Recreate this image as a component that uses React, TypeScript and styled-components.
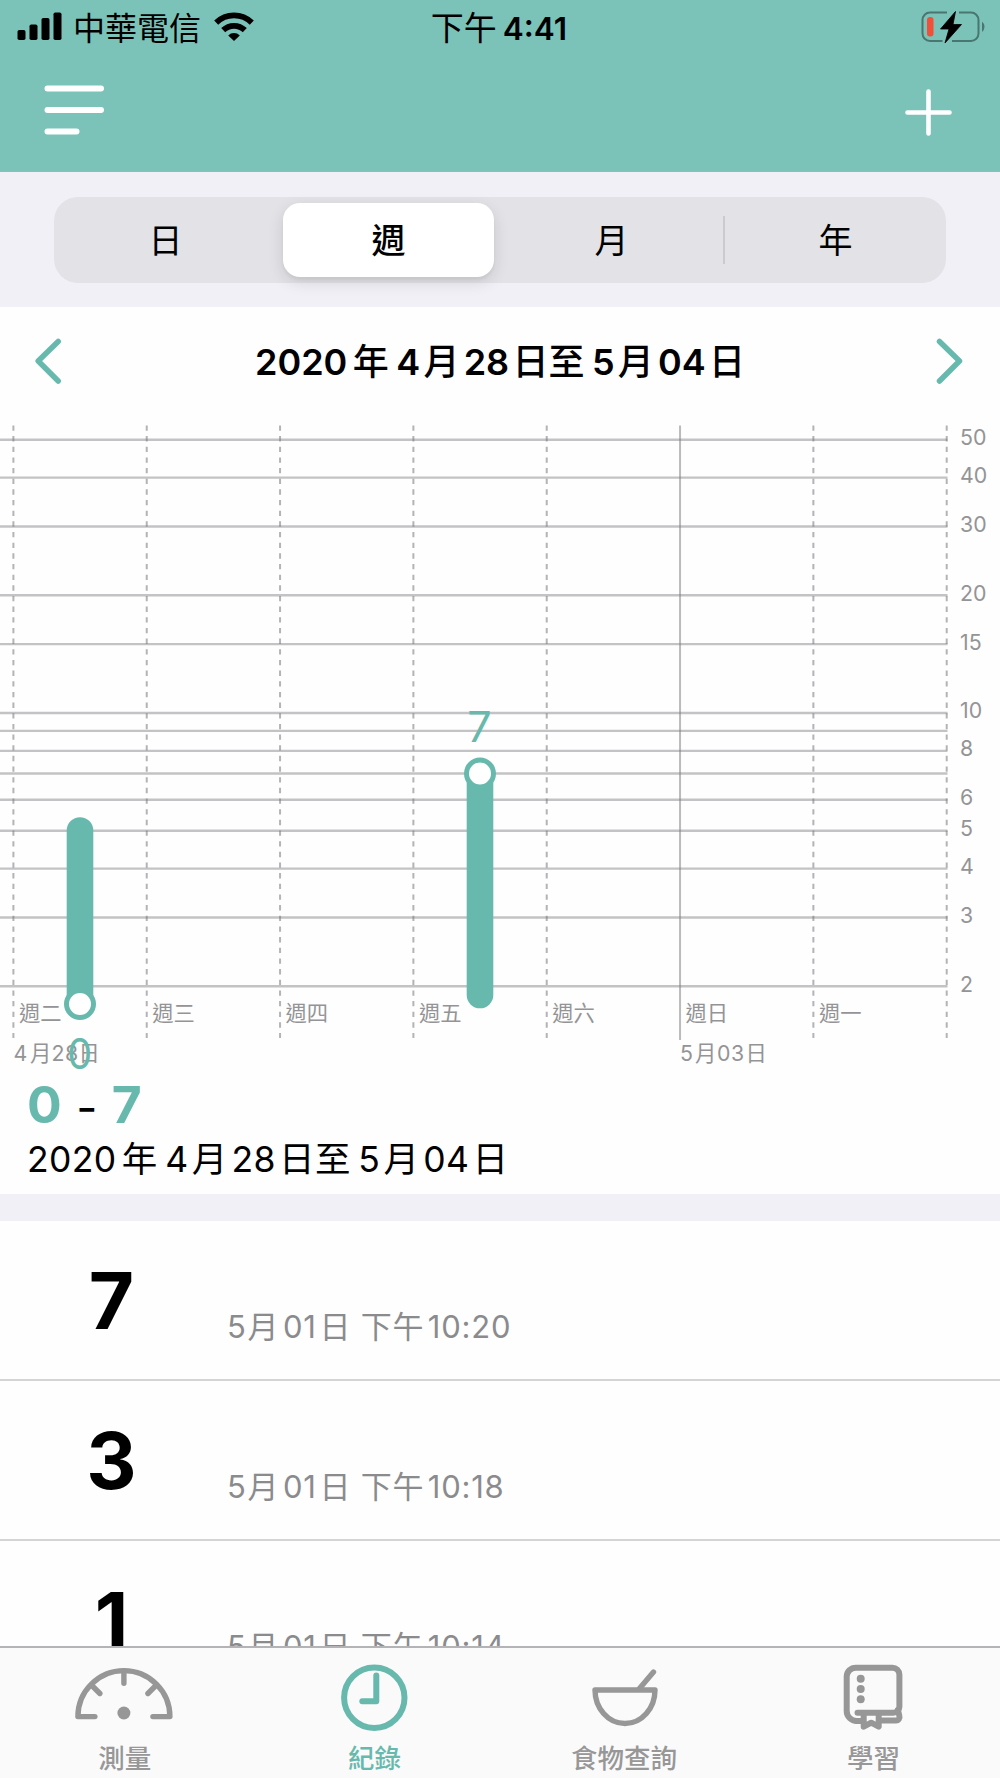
import React from "react";
import styled, { createGlobalStyle } from "styled-components";

const teal = "#68b9ad";
const grey = "#979797";
const latin = `Inter, "Noto Sans CJK TC", sans-serif`;

const GlobalStyle = createGlobalStyle`
  * { box-sizing: border-box; }
  body { margin: 0; background: #fefefe; font-family: ${latin}; color: #000; }
`;

const Screen = styled.div`
  width: 1000px;
  height: 1778px;
  overflow: hidden;
  display: flex;
  flex-direction: column;
  background: #fefefe;
`;

const Header = styled.header`
  height: 172px;
  flex: none;
  background: #7bc3b8;
  border-bottom: 1px solid #9fb5b3;
`;

const StatusBar = styled.div`
  height: 54px;
  display: grid;
  grid-template-columns: 1fr auto 1fr;
  align-items: center;
  padding: 0 14px 0 17px;
`;

const StatusSide = styled.div<{ $end?: boolean }>`
  display: flex;
  align-items: center;
  justify-content: ${(p) => (p.$end ? "flex-end" : "flex-start")};
`;

const Carrier = styled.span`
  font-size: 32px;
  line-height: 51px;
  padding-top: 3px;
  margin: 0 13px 0 11px;
  font-weight: 400;
`;

const Clock = styled.div`
  line-height: 51px;
  padding-top: 3px;
  margin-right: 5px;
  font-size: 33px;
  font-weight: 400;
  white-space: nowrap;
`;

const ClockTime = styled.span`
  font-size: 31.5px;
  font-weight: 600;
  margin-left: 6px;
`;

const NavBar = styled.div`
  height: 117px;
  display: flex;
  justify-content: space-between;
  padding: 29.5px 47px 0 43px;
`;

const IconButton = styled.button`
  border: 0;
  padding: 0;
  background: none;
  display: block;
  height: 60px;
`;

const SegmentArea = styled.div`
  height: 135px;
  flex: none;
  background: #f1f0f6;
  padding: 25px 54px 0;
`;

const SegmentedControl = styled.div`
  height: 86px;
  border-radius: 24px;
  background: #e3e2e7;
  display: grid;
  grid-template-columns: repeat(4, 1fr);
  align-items: center;
`;

const Segment = styled.div<{ $active?: boolean; $divided?: boolean }>`
  height: ${(p) => (p.$active ? "74px" : "48px")};
  margin: ${(p) => (p.$active ? "0 6px" : "0")};
  padding-top: 2px;
  border-radius: ${(p) => (p.$active ? "17px" : "0")};
  background: ${(p) => (p.$active ? "#fff" : "transparent")};
  box-shadow: ${(p) =>
    p.$active ? "0 5px 16px rgba(0,0,0,.12), 0 3px 3px rgba(0,0,0,.04)" : "none"};
  border-left: ${(p) => (p.$divided ? "2px solid #cbcacf" : "0")};
  display: flex;
  align-items: center;
  justify-content: center;
  font-size: 34px;
  font-weight: ${(p) => (p.$active ? 500 : 400)};
  line-height: 48px;
`;

const DateBar = styled.div`
  height: 118px;
  flex: none;
  display: flex;
  align-items: center;
  justify-content: space-between;
  padding: 0 32px 10px;
`;

const RangeTitle = styled.h1`
  margin: 0;
  padding-top: 2px;
  font-size: 36px;
  font-weight: 600;
  line-height: 50px;
  white-space: nowrap;
`;

const Digits = styled.span<{ $single: boolean; $first: boolean }>`
  margin-left: ${(p) => (p.$first ? 0 : p.$single ? 0.21 : 0.115)}em;
  margin-right: ${(p) => (p.$single ? (p.$first ? 0.03 : 0.09) : p.$first ? 0.15 : 0.09)}em;
`;

const Han = styled.span<{ $weight?: number }>`
  font-weight: ${(p) => p.$weight ?? 400};
  white-space: pre;
`;

const ChartBox = styled.div`
  height: 650px;
  flex: none;
`;

const ChartSvg = styled.svg`
  display: block;
  font-family: ${latin};
`;

const Summary = styled.section`
  height: 119px;
  flex: none;
  padding-left: 27px;
`;

const SummaryRange = styled.div`
  height: 59px;
  line-height: 58px;
  font-size: 51.5px;
  font-weight: 700;
  color: ${teal};
  display: flex;
`;

const SummaryDash = styled.span`
  color: #000;
  width: 50px;
  text-align: center;
  font-weight: 400;
  font-size: 46px;
  line-height: 65px;
`;

const SummaryDate = styled.div`
  font-size: 35.5px;
  line-height: 50px;
  padding-top: 1px;
  letter-spacing: 0.01em;
  white-space: nowrap;
`;

const Band = styled.div`
  height: 27px;
  flex: none;
  background: #f1f0f6;
`;

const Records = styled.div`
  flex: 1;
  min-height: 0;
  overflow: hidden;
`;

const Record = styled.div`
  height: 160px;
  display: flex;
  align-items: baseline;
  border-bottom: 2px solid #d4d4d6;
`;

const RecordValue = styled.div`
  width: 223px;
  text-align: center;
  font-size: 78px;
  font-weight: 700;
  line-height: 160px;
`;

const RecordTime = styled.div`
  position: relative;
  top: 9px;
  margin-left: 4px;
  color: #8b8b8e;
  font-size: 31px;
  letter-spacing: 0.025em;
  white-space: nowrap;
`;

const TabBar = styled.nav`
  height: 132px;
  flex: none;
  border-top: 2px solid #b4b4b6;
  background: #fafafb;
  display: grid;
  grid-template-columns: repeat(4, 249.6px);
`;

const Tab = styled.div<{ $active?: boolean }>`
  display: flex;
  flex-direction: column;
  align-items: center;
  color: ${(p) => (p.$active ? teal : grey)};
  padding-top: 12px;
`;

const TabIcon = styled.svg`
  display: block;
  flex: none;
`;

const TabLabel = styled.span`
  font-size: 26.5px;
  line-height: 36px;
  margin-top: 4px;
  font-weight: 500;
`;

function MixedText({ text, weight }: { text: string; weight?: number }) {
  const runs = text.match(/[\d:]+|[^\d:]+/g) ?? [];
  return (
    <>
      {runs.map((run, i) =>
        /\d/.test(run) ? (
          <Digits key={i} $single={run.length === 1} $first={i === 0}>
            {run}
          </Digits>
        ) : (
          <Han key={i} $weight={weight}>
            {run}
          </Han>
        ),
      )}
    </>
  );
}

const SignalIcon = () => (
  <svg width="45" height="30" viewBox="0 0 45 30">
    <rect x="0.5" y="18" width="8" height="10" rx="1.8" />
    <rect x="12.5" y="12.5" width="8" height="15.5" rx="1.8" />
    <rect x="24.5" y="6" width="8" height="22" rx="1.8" />
    <rect x="36.5" y="0.5" width="8" height="27.5" rx="1.8" />
  </svg>
);

const WifiIcon = () => (
  <svg width="40" height="30" viewBox="0 0 40 30" fill="none" stroke="#000" strokeWidth="5.8">
    <path d="M2.2 10.600a25.500 25.500 0 0 1 35.600 0" />
    <path d="M9.2 18.200a15.500 15.500 0 0 1 21.600 0" />
    <path d="M20 29l-5.800-5.600a8.300 8.300 0 0 1 11.600 0z" fill="#000" stroke="none" />
  </svg>
);

const BatteryIcon = () => (
  <svg width="66" height="34" viewBox="0 0 66 34">
    <path
      d="M27 2.500H10a7.500 7.500 0 0 0-7.500 7.500v13.500A7.500 7.500 0 0 0 10 31h12.500M39 2.500h12a7.500 7.500 0 0 1 7.500 7.500v13.500A7.500 7.500 0 0 1 51 31H32"
      fill="none"
      stroke="#49776f"
      strokeWidth="2"
    />
    <path d="M62 11.500q2.500 2 2.500 5.300t-2.500 5.300z" fill="#49776f" />
    <rect x="7" y="7" width="6.5" height="19.5" rx="3" fill="#f24e38" />
    <path d="M35.500 1.500 20.500 19h8.500L25 33 41.500 14.500H33z" stroke="#000" strokeWidth="0.8" strokeLinejoin="round" />
  </svg>
);

const DAYS = ["週二", "週三", "週四", "週五", "週六", "週日", "週一"];
const GRID_VALUES = [50, 40, 30, 20, 15, 10, 9, 8, 7, 6, 5, 4, 3, 2];
const CHART_TOP = 425;
const yFor = (v: number) => 713 - CHART_TOP + (Math.log(10) - Math.log(v)) * 169.8;
const xFor = (i: number) => 13.4 + i * 133.33;

function Chart() {
  return (
    <ChartSvg width="1000" height="650" viewBox="0 0 1000 650">
      <g stroke="#77777c" strokeOpacity="0.43">
        {GRID_VALUES.map((v) => (
          <line key={v} x1="0" x2="947.5" y1={yFor(v)} y2={yFor(v)} strokeWidth="2.4" />
        ))}
      </g>
      {Array.from({ length: 8 }, (_, i) => (
        <line
          key={i}
          x1={xFor(i)}
          x2={xFor(i)}
          y1="0.4"
          y2={i === 5 ? 615 : 613}
          stroke="#77777c"
          strokeOpacity={i === 5 ? 0.5 : 0.55}
          strokeWidth="2"
          strokeDasharray={i === 5 ? undefined : "5.33 5.33"}
        />
      ))}
      <g fill="#949496" fontSize="21.3">
        {GRID_VALUES.filter((v) => v !== 9 && v !== 7).map((v) => (
          <text key={v} x="960" y={yFor(v) + 5.4}>
            {v}
          </text>
        ))}
        {DAYS.map((d, i) => (
          <text key={d} x={xFor(i) + 5.5} y="596">
            {d}
          </text>
        ))}
        <text y="636" x="13.5 30 51.5 65 78.5">4月28日</text>
        <text y="636" x="680 695 717 731 745.5">5月03日</text>
      </g>
      <g stroke={teal} strokeWidth="26.6" strokeLinecap="round">
        <line x1="80" x2="80" y1="405.5" y2="579" />
        <line x1="480" x2="480" y1="349" y2="570" />
      </g>
      <g fill="#fff" stroke={teal} strokeWidth="5">
        <circle cx="80" cy="579" r="13.5" />
        <circle cx="480" cy="348.5" r="13.5" />
      </g>
      <g fill={teal} fontSize="43" fontWeight="400" textAnchor="middle">
        <text x="479.5" y="317">7</text>
        <text x="79.7" y="643.5" textLength="25" lengthAdjust="spacingAndGlyphs">0</text>
      </g>
    </ChartSvg>
  );
}

const GaugeIcon = () => (
  <TabIcon width="100" height="76" viewBox="1.1 0 100 76" fill="none" stroke="currentColor" strokeWidth="5.4" strokeLinecap="round" strokeLinejoin="round">
    <path d="M21 56.600H4a46 46 0 0 1 92 0H79" />
    <path d="M50 12v11.300M18.500 26l7.500 7.500M81.500 26l-7.500 7.500" />
    <circle cx="50" cy="53" r="6.5" fill="currentColor" stroke="none" />
  </TabIcon>
);

const ClockIcon = () => (
  <TabIcon width="100" height="76" viewBox="-0.3 0 100 76" fill="none" stroke="currentColor" strokeWidth="6" strokeLinecap="round" strokeLinejoin="round">
    <circle cx="50" cy="37.8" r="30.2" />
    <path d="M52 15.500v25.700H38" />
  </TabIcon>
);

const BowlIcon = () => (
  <TabIcon width="100" height="76" viewBox="-0.5 0 100 76" fill="none" stroke="currentColor" strokeWidth="5.4" strokeLinecap="round" strokeLinejoin="round">
    <path d="M20.500 30h60c0 18-13 33.500-30 33.500S20.500 48 20.500 30z" />
    <path d="M65 28.500 79 12" />
  </TabIcon>
);

const BookIcon = () => (
  <TabIcon width="100" height="76" viewBox="0 0 100 76" fill="none" stroke="currentColor" strokeWidth="6" strokeLinecap="round" strokeLinejoin="round">
    <path d="M33 61a10 10 0 0 1-10.300-10V16.500a9 9 0 0 1 9-8.800h36.500a7 7 0 0 1 7.200 7v32a6 6 0 0 1-6 6H33.500" />
    <path d="M33 61h5M58 60.500h14a3.500 3.500 0 0 0 3.400-4.500l-1.500-6" />
    <path d="M39.700 53v13.700l7.500-4 7.500 4V53" />
    <g fill="currentColor" stroke="none">
      <circle cx="36.7" cy="18.7" r="4" />
      <circle cx="36.7" cy="29" r="4" />
      <circle cx="36.7" cy="39.3" r="4" />
    </g>
  </TabIcon>
);

const RECORDS = [
  { value: 7, time: "10:20" },
  { value: 3, time: "10:18" },
  { value: 1, time: "10:14" },
];

export default function App() {
  return (
    <Screen>
      <GlobalStyle />
      <Header>
        <StatusBar>
          <StatusSide>
            <SignalIcon />
            <Carrier>中華電信</Carrier>
            <WifiIcon />
          </StatusSide>
          <Clock>
            下午<ClockTime>4:41</ClockTime>
          </Clock>
          <StatusSide $end>
            <BatteryIcon />
          </StatusSide>
        </StatusBar>
        <NavBar>
          <IconButton aria-label="選單">
            <svg width="64" height="56" viewBox="0 0 64 56" stroke="#fff" strokeWidth="6" strokeLinecap="round">
              <path d="M4.500 4.500h53.500M4.500 26h53.500M4.500 47.500h29" />
            </svg>
          </IconButton>
          <IconButton aria-label="新增">
            <svg width="50" height="56" viewBox="0 0 50 56" stroke="#fff" strokeWidth="4.6" strokeLinecap="round">
              <path d="M25.500 7.500v42M4.500 28.500h42" />
            </svg>
          </IconButton>
        </NavBar>
      </Header>
      <SegmentArea>
        <SegmentedControl>
          <Segment>日</Segment>
          <Segment $active>週</Segment>
          <Segment>月</Segment>
          <Segment $divided>年</Segment>
        </SegmentedControl>
      </SegmentArea>
      <DateBar>
        <svg width="32" height="50" viewBox="0 0 32 50" fill="none" stroke={teal} strokeWidth="5.5" strokeLinecap="round" strokeLinejoin="round">
          <path d="M26.200 5.500 6.200 25l20 20" />
        </svg>
        <RangeTitle>
          <MixedText text="2020年4月28日至5月04日" weight={500} />
        </RangeTitle>
        <svg width="32" height="50" viewBox="0 0 32 50" fill="none" stroke={teal} strokeWidth="5.5" strokeLinecap="round" strokeLinejoin="round">
          <path d="M3.500 5.500 23.500 25l-20 20" />
        </svg>
      </DateBar>
      <ChartBox>
        <Chart />
      </ChartBox>
      <Summary>
        <SummaryRange>
          0<SummaryDash>-</SummaryDash>7
        </SummaryRange>
        <SummaryDate>
          <MixedText text="2020年4月28日至5月04日" />
        </SummaryDate>
      </Summary>
      <Band />
      <Records>
        {RECORDS.map((r) => (
          <Record key={r.time}>
            <RecordValue>{r.value}</RecordValue>
            <RecordTime>
              <MixedText text={`5月01日 下午${r.time}`} />
            </RecordTime>
          </Record>
        ))}
      </Records>
      <TabBar>
        <Tab>
          <GaugeIcon />
          <TabLabel>測量</TabLabel>
        </Tab>
        <Tab $active>
          <ClockIcon />
          <TabLabel>紀錄</TabLabel>
        </Tab>
        <Tab>
          <BowlIcon />
          <TabLabel>食物查詢</TabLabel>
        </Tab>
        <Tab>
          <BookIcon />
          <TabLabel>學習</TabLabel>
        </Tab>
      </TabBar>
    </Screen>
  );
}
